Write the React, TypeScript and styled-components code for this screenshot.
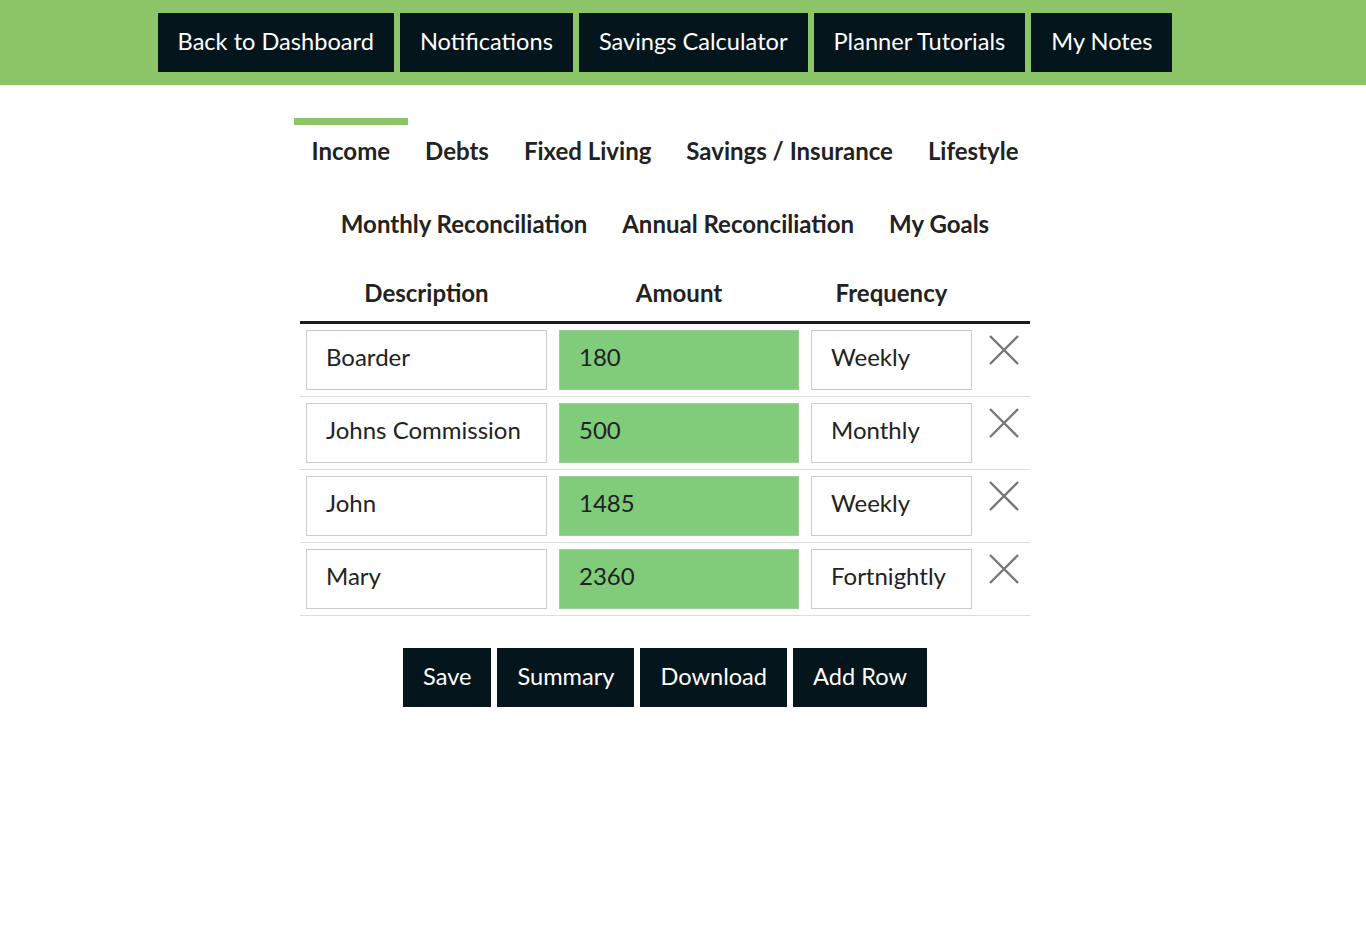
import { createGlobalStyle } from 'styled-components';
import styled from 'styled-components';

const GlobalStyle = createGlobalStyle`
  body {
    margin: 0;
    font-family: Lato, 'Open Sans', sans-serif;
    background: #ffffff;
    color: #222;
  }
`;

const navLinks = [
  'Back to Dashboard',
  'Notifications',
  'Savings Calculator',
  'Planner Tutorials',
  'My Notes',
];

const tabRows = [
  ['Income', 'Debts', 'Fixed Living', 'Savings / Insurance', 'Lifestyle'],
  ['Monthly Reconciliation', 'Annual Reconciliation', 'My Goals'],
];

const rows = [
  { description: 'Boarder', amount: '180', frequency: 'Weekly' },
  { description: 'Johns Commission', amount: '500', frequency: 'Monthly' },
  { description: 'John', amount: '1485', frequency: 'Weekly' },
  { description: 'Mary', amount: '2360', frequency: 'Fortnightly' },
];

export default function App() {
  return (
    <>
      <GlobalStyle />
      <Header>
        <HeaderInner>
          {navLinks.map((label) => (
            <DarkButton key={label}>{label}</DarkButton>
          ))}
        </HeaderInner>
      </Header>
      <Main>
        <Tabs>
          {tabRows.map((row, i) => (
            <TabRow key={i}>
              {row.map((label) => (
                <Tab key={label} $active={label === 'Income'}>
                  {label}
                </Tab>
              ))}
            </TabRow>
          ))}
        </Tabs>
        <Table>
          <thead>
            <tr>
              <Th $width={253}>Description</Th>
              <Th $width={252}>Amount</Th>
              <Th $width={173}>Frequency</Th>
              <Th $width={52}></Th>
            </tr>
          </thead>
          <tbody>
            {rows.map((row, i) => (
              <tr key={i}>
                <Td>
                  <Field defaultValue={row.description} />
                </Td>
                <Td>
                  <Field $amount defaultValue={row.amount} />
                </Td>
                <Td>
                  <Field defaultValue={row.frequency} />
                </Td>
                <Td>
                  <RemoveButton aria-label="Remove row">
                    <svg width="30" height="30" viewBox="0 0 30 30">
                      <path
                        d="M1 1 L29 29 M29 1 L1 29"
                        stroke="#777"
                        strokeWidth="2.4"
                        fill="none"
                      />
                    </svg>
                  </RemoveButton>
                </Td>
              </tr>
            ))}
          </tbody>
        </Table>
        <Actions>
          <DarkButton>Save</DarkButton>
          <DarkButton>Summary</DarkButton>
          <DarkButton>Download</DarkButton>
          <DarkButton>Add Row</DarkButton>
        </Actions>
      </Main>
    </>
  );
}

const Header = styled.header`
  background: #8cc567;
  height: 85px;
`;

const HeaderInner = styled.nav`
  width: 1330px;
  height: 100%;
  display: flex;
  justify-content: center;
  align-items: flex-start;
  gap: 6px;
  padding-top: 13px;
  box-sizing: border-box;
`;

const DarkButton = styled.button`
  height: 59px;
  padding: 0 20px 4px;
  border: none;
  border-radius: 0;
  background: #04151c;
  color: #ffffff;
  font-family: Lato, 'Open Sans', sans-serif;
  font-size: 23.6px;
  cursor: pointer;
`;

const Main = styled.main`
  width: 1330px;
  display: flex;
  flex-direction: column;
  align-items: center;
  padding-top: 33px;
`;

const Tabs = styled.div`
  display: flex;
  flex-direction: column;
  align-items: center;
`;

const TabRow = styled.div`
  display: flex;
  justify-content: center;
  height: 73px;
`;

const Tab = styled.div<{ $active?: boolean }>`
  padding: 6px 17.5px 0;
  border-top: 7px solid ${(p) => (p.$active ? '#8cc567' : 'transparent')};
  font-size: 24px;
  font-weight: 700;
  line-height: 40px;
  color: #222;
  cursor: pointer;
`;

const Table = styled.table`
  width: 730px;
  border-collapse: collapse;
  margin-top: -6px;
`;

const Th = styled.th<{ $width: number }>`
  width: ${(p) => p.$width}px;
  height: 57px;
  padding: 6px 0 0;
  border-bottom: 3px solid #1c1c1c;
  font-size: 24px;
  font-weight: 700;
  text-align: center;
  vertical-align: middle;
  color: #222;
`;

const Td = styled.td`
  padding: 6px;
  border-bottom: 1px solid #dddddd;
  vertical-align: top;
`;

const Field = styled.input<{ $amount?: boolean }>`
  display: block;
  width: 100%;
  height: 60px;
  box-sizing: border-box;
  padding: 0 19px 7px;
  border: 1px solid ${(p) => (p.$amount ? '#9bcf95' : '#cccccc')};
  background: ${(p) => (p.$amount ? '#80cc7a' : '#ffffff')};
  font-family: Lato, 'Open Sans', sans-serif;
  font-size: 24px;
  color: #222;
  outline: none;
`;

const RemoveButton = styled.button`
  display: block;
  margin: 5px auto 0;
  padding: 0;
  border: none;
  background: none;
  width: 30px;
  height: 30px;
  cursor: pointer;
`;

const Actions = styled.div`
  display: flex;
  gap: 6px;
  margin-top: 32px;
`;
